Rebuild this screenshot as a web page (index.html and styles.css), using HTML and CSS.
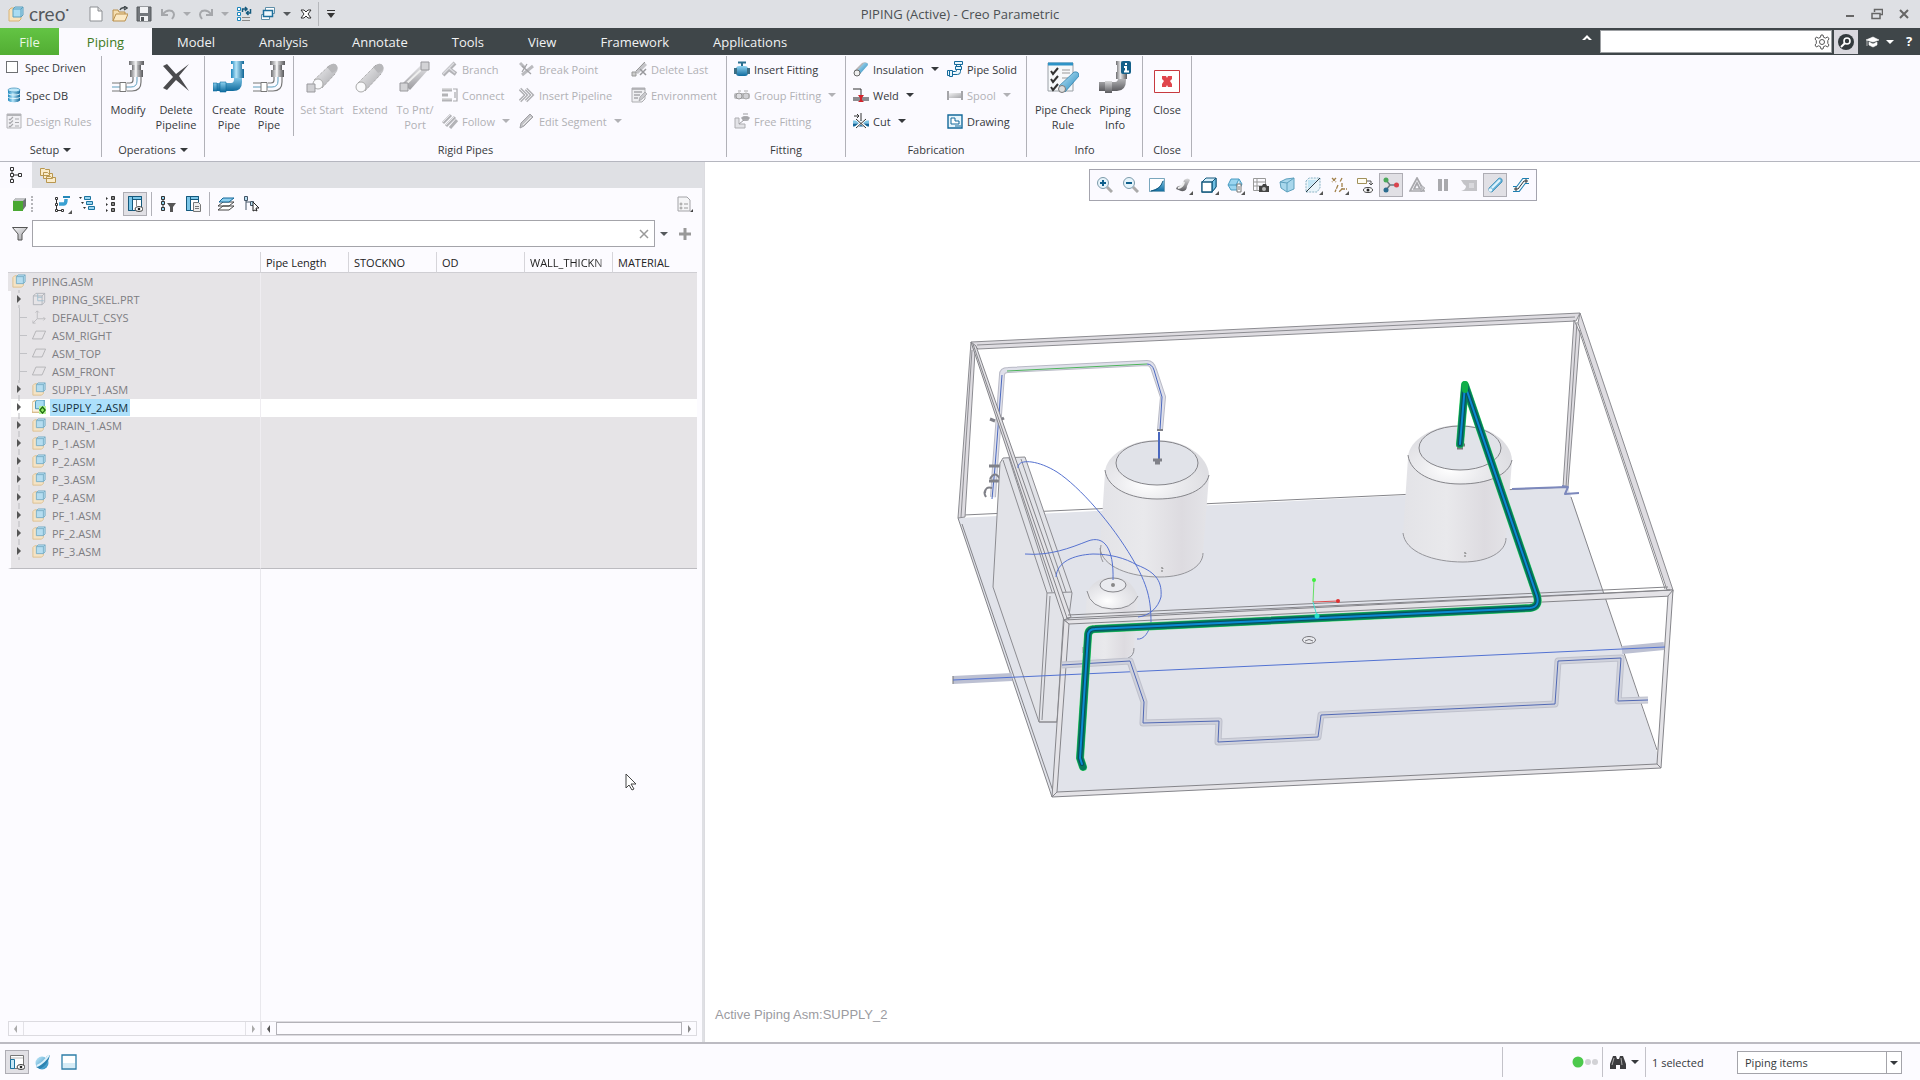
FILE: index.html
```html
<!DOCTYPE html>
<html lang="en">
<head>
<meta charset="utf-8">
<title>PIPING (Active) - Creo Parametric</title>
<link rel="stylesheet" href="styles.css">
</head>
<body>
<svg class="sprite" aria-hidden="true">
  <defs>
    <linearGradient id="steel" x1="0" y1="0" x2="1" y2="1"><stop offset="0" stop-color="#f4f4f6"/><stop offset="1" stop-color="#a3a3a7"/></linearGradient>
    <linearGradient id="water" x1="0" y1="0" x2="1" y2="1"><stop offset="0" stop-color="#c9ebfa"/><stop offset="1" stop-color="#1c86bd"/></linearGradient>
    <linearGradient id="waterV" x1="0" y1="0" x2="0" y2="1"><stop offset="0" stop-color="#8fd2f0"/><stop offset="1" stop-color="#0f6b9e"/></linearGradient>
    <linearGradient id="waterH" x1="0" y1="0" x2="1" y2="0"><stop offset="0" stop-color="#1b86be"/><stop offset=".4" stop-color="#b5e4f8"/><stop offset="1" stop-color="#0f6596"/></linearGradient>
    <linearGradient id="metalH" x1="0" y1="0" x2="1" y2="0"><stop offset="0" stop-color="#6d6d70"/><stop offset=".4" stop-color="#e6e6e8"/><stop offset="1" stop-color="#59595c"/></linearGradient>
    <linearGradient id="metalV" x1="0" y1="0" x2="0" y2="1"><stop offset="0" stop-color="#d8d8da"/><stop offset="1" stop-color="#5c5c60"/></linearGradient>
    <linearGradient id="tank" x1="0" y1="0" x2="1" y2="0"><stop offset="0" stop-color="#e3e3e7"/><stop offset=".4" stop-color="#e9e9ec"/><stop offset=".75" stop-color="#dddbe0"/><stop offset="1" stop-color="#e4e4e8"/></linearGradient>
    <radialGradient id="dome" cx=".4" cy=".75" r=".6"><stop offset="0" stop-color="#fff"/><stop offset=".5" stop-color="#ebebee"/><stop offset="1" stop-color="#dedee2"/></radialGradient>
  </defs>
  <symbol id="asm" viewBox="0 0 16 16"><path d="M1 4l2-2h4v8h6v3l-2 2H1z" fill="#f8e3bd" stroke="#d9b577"/><path d="M5 3l2-2h8v8l-2 2H5z" fill="#a9dcf3" stroke="#5c9fbd"/><path d="M5 3h8v8M13 3l2-2" fill="none" stroke="#5c9fbd"/></symbol>
  <symbol id="tri" viewBox="0 0 8 8"><path d="M0 2h8L4 6z" fill="currentColor"/></symbol>
  <symbol id="new" viewBox="0 0 16 16"><path d="M2 1h8l4 4v10H2z" fill="#fff" stroke="#8c8f93"/><path d="M10 1v4h4" fill="#ddd" stroke="#8c8f93"/></symbol>
  <symbol id="open" viewBox="0 0 16 16"><path d="M1 15V4h5l1 2h6v3" fill="#f5deb0" stroke="#b98f4c"/><path d="M1 15l3-7h12l-3 7z" fill="#fbe9c5" stroke="#b98f4c"/><path d="M8 4q1-3 5-2M12 0l3 2-3 2" fill="none" stroke="#3f474a" stroke-width="1.4"/></symbol>
  <symbol id="save" viewBox="0 0 16 16"><path d="M1 1h14v14H1z" fill="#74787d" stroke="#54585c"/><path d="M4 1h8v6H4zM4 10h8v5H4z" fill="#f2f3f5"/><path d="M5 11h3v4H5z" fill="#54585c"/></symbol>
  <symbol id="undo" viewBox="0 0 16 16"><path d="M2 3v6h6" fill="none" stroke="#a5a7ab" stroke-width="2"/><path d="M3 8q4-5 9-3q4 3 0 8" fill="none" stroke="#a5a7ab" stroke-width="2"/></symbol>
  <symbol id="redo" viewBox="0 0 16 16"><path d="M14 3v6H8" fill="none" stroke="#a5a7ab" stroke-width="2"/><path d="M13 8Q9 3 4 5q-4 3 0 8" fill="none" stroke="#a5a7ab" stroke-width="2"/></symbol>
  <symbol id="regen" viewBox="0 0 16 16"><path d="M1.500 1.500h3v3h-3zM1.500 6.500h3v3h-3zM1.500 11.500h3v3h-3z" fill="#fff" stroke="#1d87bd"/><path d="M6 11.500h8M6 14.500h8" stroke="#888"/><path d="M6.500 6V3h4M9 1l2 2-2 2M14.500 3v4h-4M12.500 5l-2 2 2 2" fill="none" stroke="#14597d" stroke-width="1.500"/></symbol>
  <symbol id="windows" viewBox="0 0 16 16"><path d="M5.500 1.500h9v6h-9zM1.500 8.500h8v5h-8z" fill="#fff" stroke="#5f8fa8"/><path d="M3.500 4.500h9v6h-9z" fill="#eef8fd" stroke="#1d6f9c" stroke-width="1.500"/></symbol>
  <symbol id="closewin" viewBox="0 0 16 16"><path d="M3 4h3l2 2 2-2h3l-3 4 3 4h-3l-2-2-2 2H3l3-4z" fill="#fff" stroke="#333"/></symbol>
  <symbol id="db" viewBox="0 0 16 16"><path d="M2 3v10c0 3 12 3 12 0V3z" fill="url(#waterH)"/><ellipse cx="8" cy="3" rx="6" ry="2" fill="#bfe7f8" stroke="#1b7aa9" stroke-width=".6"/><path d="M2 6.500c0 2 12 2 12 0M2 10c0 2 12 2 12 0" fill="none" stroke="#e2f5fc"/></symbol>
  <symbol id="rules" viewBox="0 0 16 16"><path d="M1 1h14v14H1z" fill="#f1f0f4" stroke="#b4b4b8"/><path d="M1 2h14" stroke="#b4b4b8" stroke-width="2"/><path d="M3 6l1 1 3-3M3 9.500l1 1 3-3M3 13l1 1 3-3M9 6h4M9 9.500h4M9 13h4" fill="none" stroke="#a9a9ad" stroke-width="1.200"/></symbol>
  <symbol id="routepipe" viewBox="0 0 32 32"><path d="M17 0h15v4H17z" fill="url(#metalH)"/><path d="M20 4h9v5h-9z" fill="url(#metalH)"/><path d="M18 9h13v7H18z" fill="url(#metalH)"/><path d="M24 0v16" stroke="#fff"/><path d="M21 16v3q0 3-3 3h-3M29 16v5q0 9-9 9h-5M0 22h8M0 30h8" fill="none" stroke="#777" stroke-width="1.200"/><path d="M25 16v4q0 6-6 6H0" fill="none" stroke="#5d9dbc"/><path d="M8 21.500h6v9H8z" fill="#fff" stroke="#777"/></symbol>
  <symbol id="createpipe" viewBox="0 0 32 32"><path d="M0 22h18q3 0 3-4v-3h8v6q0 9-9 9H0z" fill="url(#waterV)"/><path d="M18 0h13v3H18zM20 3h9v6h-9zM18 8h13v9H18z" fill="url(#waterH)"/><path d="M0 22h4v8H0zM7 21h6v10H7z" fill="url(#waterV)" stroke="#0f6b9e" stroke-width=".6"/></symbol>
  <symbol id="delpipe" viewBox="0 0 32 32"><path d="M3 5l4-2 9 10L29 3 19 15l10 15L16 19 7 29l-4-2 10-11z" fill="#4b4b4e"/></symbol>
  <symbol id="setstart" viewBox="0 0 32 32"><path d="M8 19L24 4q5-3 7 1t-2 8L16 27z" fill="url(#steel)"/><path d="M24 4q5-3 7 1t-5 7l-5-6z" fill="#b7b7ba"/><circle cx="12" cy="23" r="5" fill="#fafafc" stroke="#aaa"/><path d="M8 19L24 4M16 27l13-14" stroke="#999" stroke-dasharray="1 1"/><path d="M1 23h8v8H1z" fill="#d0d0d3" stroke="#99999d"/></symbol>
  <symbol id="extend" viewBox="0 0 32 32"><path d="M4 22L22 4q5-3 7 1t-2 8L11 30z" fill="url(#steel)"/><path d="M22 4q5-3 7 1t-5 7l-5-6z" fill="#b7b7ba"/><circle cx="7" cy="26" r="5" fill="#fafafc" stroke="#aaa"/><path d="M4 22L22 4M11 30l16-17" stroke="#999" stroke-dasharray="1 1"/></symbol>
  <symbol id="topnt" viewBox="0 0 32 32"><path d="M4 22L23 3l6 6-18 20z" fill="url(#metalV)" opacity=".6"/><path d="M8 22L26 5" stroke="#eee" stroke-width="2"/><path d="M1 22h8v8H1zM22 1h8v8h-8z" fill="#d3d3d6" stroke="#98989c"/></symbol>
  <symbol id="branch" viewBox="0 0 16 16"><path d="M1 14L13 2M7 8l7 5" stroke="#b3b3b7" stroke-width="4"/><path d="M1 13L12 2M7 7l6 5" stroke="#dcdce0" stroke-width="1.500"/></symbol>
  <symbol id="connect" viewBox="0 0 16 16"><path d="M0 3h10M0 8h6M0 13h10" stroke="#b3b3b7" stroke-width="3"/><path d="M0 2h10M0 12h10" stroke="#ddd"/><path d="M11 2h4v12h-4M13 5v6" fill="none" stroke="#a9a9ad" stroke-width="1.200"/></symbol>
  <symbol id="follow" viewBox="0 0 16 16"><path d="M1 10L9 2M4 13l9-9M8 15l7-8" stroke="#b3b3b7" stroke-width="3"/><path d="M1 9l8-8M4 12l9-9" stroke="#e4e4e8"/></symbol>
  <symbol id="breakpt" viewBox="0 0 16 16"><path d="M3 14l11-9M1 2l5 5" stroke="#bbbbbf" stroke-width="3"/><path d="M3 5l9 8M8 3l-5 8" stroke="#a2a2a6" stroke-width="1.300"/></symbol>
  <symbol id="inspipe" viewBox="0 0 16 16"><path d="M1 2l6 6-6 6M7 2l6 6-6 6" fill="none" stroke="#b3b3b7" stroke-width="3.500"/><path d="M1 2l6 6-6 6M7 2l6 6-6 6" fill="none" stroke="#e9e9ed"/></symbol>
  <symbol id="editseg" viewBox="0 0 16 16"><path d="M1 15l1-5 9-9 3 3-9 9z" fill="#c4c4c8" stroke="#a0a0a4"/><path d="M4 12l8-8" stroke="#eee"/></symbol>
  <symbol id="dellast" viewBox="0 0 16 16"><path d="M4 11l9-10 3 3-9 9z" fill="#c4c4c8"/><path d="M1 11h4v4H1z" fill="#ccc" stroke="#999"/><path d="M5 10l9-9" stroke="#999"/><path d="M9 8l6 6M15 8l-6 6" stroke="#98989c" stroke-width="1.500"/></symbol>
  <symbol id="env" viewBox="0 0 16 16"><path d="M1 1h13v11l-3 3H1z" fill="#efeff2" stroke="#adadb1"/><path d="M1 2h13M3 5h8M3 8h6M3 11h4" stroke="#a8a8ac" stroke-width="1.500"/><path d="M8 14l1-4 5-5 2 2-5 5z" fill="#c9c9cd" stroke="#9f9fa3" stroke-width=".7"/></symbol>
  <symbol id="insfit" viewBox="0 0 16 16"><path d="M4 1.500h8M8 1v4" stroke="#2a6f8f" stroke-width="2"/><rect x="2" y="5" width="12" height="10" rx="3" fill="url(#waterV)"/><path d="M0 7h3v6H0zM13 7h3v6h-3z" fill="#3c6f86"/></symbol>
  <symbol id="groupfit" viewBox="0 0 16 16"><rect x="0" y="6" width="16" height="6" rx="2" fill="#b9b9bd"/><circle cx="5" cy="9" r="3" fill="#dcdce0" stroke="#999"/><circle cx="12" cy="9" r="3" fill="#cfcfd3" stroke="#aaa"/><path d="M4 4h3M10 4h4" stroke="#aaa"/></symbol>
  <symbol id="freefit" viewBox="0 0 16 16"><path d="M1 5v10h10v-4H5V5z" fill="#e3e3e7" stroke="#adadb1"/><rect x="8" y="3" width="7" height="5" rx="2" fill="#aeaeb2"/><path d="M9 1h5M7 5h9M5 11l5-4" stroke="#9d9da1"/></symbol>
  <symbol id="insul" viewBox="0 0 16 16"><path d="M1 10L9 2q4-2 6 1L6 14q-5 0-5-4z" fill="#b5b5b8"/><path d="M3 11l8-9q4-1 4 2l-8 9z" fill="url(#water)"/><circle cx="4" cy="12" r="3" fill="#eee" stroke="#666"/></symbol>
  <symbol id="weld" viewBox="0 0 16 16"><path d="M0 12h16" stroke="#8c8c90" stroke-width="4"/><path d="M0 2h8v6" fill="none" stroke="#333"/><path d="M5 8h6l-2 3v2l2 2H5l2-2v-2z" fill="#d2232b"/></symbol>
  <symbol id="cut" viewBox="0 0 16 16"><path d="M0 9h16" stroke="#7cc5e6" stroke-width="3"/><path d="M0 12h16" stroke="#15679a" stroke-width="3"/><path d="M2 15l11-9M3 6l11 9" stroke="#fff" stroke-width="2.500"/><path d="M3 15l10-9M3 6l10 9M8 0v8M1 3h5M4 1l2 2-2 2" fill="none" stroke="#333"/></symbol>
  <symbol id="solid" viewBox="0 0 16 16"><path d="M7.500.5h8v3h-8zM9.500 3.500h4v2h-4zM8.500 5.500h6v3h-6zM9.500 8.500v1q0 1-1 1h-3M13.500 8.500v2q0 3-3 3h-5M.5 9.500h2v5h-2zM2.500 9.500h3v6h-3z" fill="#e8f6fc" stroke="#14699a"/></symbol>
  <symbol id="spool" viewBox="0 0 16 16"><path d="M1 6h14v5H1z" fill="url(#steel)"/><path d="M1 4v9M15 4v9" stroke="#a5a5a9" stroke-width="2"/></symbol>
  <symbol id="drawing" viewBox="0 0 16 16"><path d="M1 2h14v13H1z" fill="#e6f5fc" stroke="#14699a" stroke-width="1.400"/><path d="M4 5h4v3h4v3H4z" fill="#fff" stroke="#14699a"/><path d="M8 13h6" stroke="#14699a"/></symbol>
  <symbol id="check" viewBox="0 0 32 32"><path d="M1 2h25v28H1z" fill="#f6f8fa" stroke="#9aa0a6"/><path d="M1 3h25" stroke="#2d93c7" stroke-width="3"/><path d="M4 10l2 3 5-6M4 18l2 3 5-6M4 26l2 3 5-6" fill="none" stroke="#333" stroke-width="2"/><path d="M15 9h8M15 12h8M15 17h6" stroke="#999"/><path d="M12 25L27 11q5-1 5 4L18 31z" fill="url(#water)" stroke="#0f6b9e" stroke-width=".6"/><circle cx="15" cy="28" r="3.500" fill="#ddd" stroke="#777"/></symbol>
  <symbol id="info" viewBox="0 0 32 32"><path d="M0 21h16q3 0 3-4v-4h8v6q0 11-9 11H0z" fill="url(#metalV)"/><path d="M17 0h6v4h-6zM18 4h8v7h-8zM17 11h11v7H17z" fill="url(#metalH)"/><path d="M6 20h7v12H6z" fill="url(#metalV)"/><rect x="22" y="0" width="10" height="13" rx="2" fill="#14608a"/><path d="M27 2v2M25 6h2v4M25 10.500h5" stroke="#fff" stroke-width="2" fill="none"/></symbol>
  <symbol id="closebig" viewBox="0 0 32 32"><path d="M3.500 9.500h25v22h-25z" fill="#fff" stroke="#c73a40"/><path d="M11 15h4l1 2 1-2h4v3l-2 2 2 3v3h-4l-1-2-1 2h-4v-3l2-3-2-2z" fill="#e0464c"/></symbol>
  <symbol id="gear" viewBox="0 0 16 16"><path d="M7 1h2l.6 2.300 2 .8 2-1.200 1.400 2-1.200 1.700v2.800L15 11l-1.400 2-2-1.200-2 .8L9 15H7l-.6-2.400-2-.8-2 1.200L1 11l1.300-1.600V6.600L1 5l1.400-2 2 1.200 2-.8z" fill="#fff" stroke="#555"/><circle cx="8" cy="8" r="2.500" fill="#fff" stroke="#555"/></symbol>
  <symbol id="find" viewBox="0 0 16 16"><circle cx="8" cy="8" r="8" fill="#333a3d"/><circle cx="9" cy="7" r="3" fill="none" stroke="#fff" stroke-width="1.600"/><path d="M7 9l-4 4" stroke="#fff" stroke-width="2"/></symbol>
  <symbol id="cap" viewBox="0 0 16 16"><path d="M2 6l7-3 6 3-6 2zM5 8l4 2 4-2v3l-4 2-4-2zM3 7v5" fill="#fff" stroke="#fff" stroke-width=".6"/></symbol>
  <symbol id="treetab" viewBox="0 0 16 16"><path d="M2.500.5h3v3h-3zM2.500 6.500h3v3h-3zM2.500 12.500h3v3h-3zM10.500 6.500h3v3h-3zM4 4v2M4 10v2M6 8h4" fill="none" stroke="#333"/></symbol>
  <symbol id="folders" viewBox="0 0 16 16"><path d="M.5 1.500h4l1 1h4v6h-9zM3.500 5.500h4l1 1h4v5h-9zM6.500 9.500h4l1 1h4v5h-9z" fill="#fbecca" stroke="#b9974f"/></symbol>
  <symbol id="cube" viewBox="0 0 16 16"><path d="M2 5l3-3h10v8l-3 4z" fill="#6f7275"/><path d="M2 5l3-3h10l-3 3z" fill="#c2c4c6"/><path d="M2 5h10v10H2z" fill="#4aa832"/></symbol>
  <symbol id="tpipes" viewBox="0 0 16 16"><path d="M1.500 1.500h2v2h-2zM1.500 7.500h2v2h-2zM1.500 13.500h2v2h-2zM7.500 13.500h2v2h-2zM2.500 4v3M2.500 10v3M4 14.500h3" fill="none" stroke="#333"/><path d="M5 8h5q2 0 2-5" fill="none" stroke="#3aa0d2" stroke-width="3.500"/><path d="M9 1h7" stroke="#2487b8" stroke-width="2" fill="none"/></symbol>
  <symbol id="texpand" viewBox="0 0 16 16"><path d="M0 1h3L1.500 3zM2 6h3L3.500 8zM4 11h3L5.500 13z" fill="#333"/><path d="M5.500.5h6v3h-6zM7.500 5.500h6v3h-6zM9.500 10.500h6v3h-6z" fill="#9bd5f0" stroke="#1c739f"/></symbol>
  <symbol id="tlist" viewBox="0 0 16 16"><path d="M3 1l2 1.500L3 4zM3 7l2 1.500L3 10zM3 13l2 1.500L3 16z" fill="#333"/><path d="M8.500.5h3v3h-3zM8.500 6.500h3v3h-3zM8.500 12.500h3v3h-3z" fill="#888" stroke="#333"/></symbol>
  <symbol id="tcols" viewBox="0 0 16 16"><path d="M1.500.5h13v14h-13z" fill="#fff" stroke="#14597d"/><path d="M1.500.5h4v14h-4zM5.500.5h9v3h-9z" fill="#7cc6e8" stroke="#14597d"/><path d="M9.500 4v6" stroke="#888"/><ellipse cx="12" cy="13" rx="4" ry="2.500" fill="#fff" stroke="#444"/><circle cx="12" cy="13" r="1.300" fill="#222"/></symbol>
  <symbol id="tfilter" viewBox="0 0 16 16"><path d="M1.500.5h3v3h-3zM1.500 5.500h3v3h-3zM1.500 11.500h3v3h-3zM3 4v1M3 9v2" fill="#8fcfee" stroke="#333"/><path d="M7 7h9l-3 4v5h-3v-5z" fill="#555"/></symbol>
  <symbol id="tcolset" viewBox="0 0 16 16"><path d="M1.500.5h12v14h-12z" fill="#fff" stroke="#14597d"/><path d="M1.500.5h4v14h-4zM5.500.5h8v3h-8z" fill="#7cc6e8" stroke="#14597d"/><path d="M8.500 6.500h5l2 2v7h-7z" fill="#eee" stroke="#777"/><path d="M10 10.500h4M10 12.500h4" stroke="#777"/></symbol>
  <symbol id="layers" viewBox="0 0 16 16"><path d="M0 14l5-4h11l-5 4zM0 10l5-4h11l-5 4z" fill="#fff" stroke="#444"/><path d="M1 6l4-4h11l-5 4z" fill="#8fcfee" stroke="#14699a"/></symbol>
  <symbol id="tsel" viewBox="0 0 16 16"><path d="M1.500.5h3v4h-3zM3 5v9M3 6h4M7.500 5.500h3v4h-3z" fill="#b9e0f3" stroke="#456"/><path d="M10 6l6 6h-3l1 3-2-1-2 1z" fill="#fff" stroke="#222"/></symbol>
  <symbol id="page" viewBox="0 0 16 16"><path d="M1 1h9l3 3v11H1z" fill="#f5f5f7" stroke="#a3a3a7"/><circle cx="4" cy="8" r="1" fill="none" stroke="#999"/><circle cx="4" cy="12" r="1" fill="none" stroke="#999"/><path d="M7 8h4M7 12h4" stroke="#999"/><path d="M16 13v3h-3z" fill="#444"/></symbol>
  <symbol id="funnel" viewBox="0 0 16 16"><path d="M.5 1.500h15L10 8v6H6V8z" fill="url(#steel)" stroke="#555"/></symbol>
  <symbol id="skel" viewBox="0 0 16 16"><path d="M1.500 4.500l3-3h10v10l-3 3h-10zM1.500 4.500h10v10M11.500 4.500l3-3" fill="none" stroke="#9fa4aa"/><path d="M6.500 2v8h7M6.500 6h5" fill="none" stroke="#8fb6c9"/></symbol>
  <symbol id="csys" viewBox="0 0 16 16"><path d="M6 1v9l-5 5M6 10h9M4 3l2-2 2 2M13 8l2 2-2 2M1 12v3h3" fill="none" stroke="#b0b0b4"/></symbol>
  <symbol id="plane" viewBox="0 0 16 16"><path d="M.5 12.500l4-9h11l-4 9z" fill="none" stroke="#a2a2a6"/></symbol>
  <symbol id="active" viewBox="0 0 16 16"><path d="M0 3l2-2h3v8h6v3l-2 2H0z" fill="#fbf3e1" stroke="#c79f5b"/><path d="M4 2l2-2h8v8l-2 2H4z" fill="#a9dcf3" stroke="#3f8fb4"/><path d="M8 7h8v9H8z" fill="#b9f59a"/><path d="M12 8l3 3.500-3 3.500-3-3.500z" fill="#8fe861" stroke="#1d6a10" stroke-width="1.500"/></symbol>
  <symbol id="node" viewBox="0 0 16 18"><path d="M8 0v3M8 15v3" stroke="#b9b9bd"/><path d="M6 5l4 4-4 4z" fill="#555"/></symbol>
  <symbol id="tick" viewBox="0 0 16 18"><path d="M8.500 0v18M8.500 9.500H16" stroke="#c2c2c6"/></symbol>
  <symbol id="zoomin" viewBox="0 0 16 16"><path d="M10 10l5 5" stroke="#aaa" stroke-width="3"/><circle cx="6" cy="6" r="5.500" fill="#e6f4fb" stroke="#7d9aaa"/><path d="M6 3v6M3 6h6" stroke="#0f5f8c" stroke-width="2"/></symbol>
  <symbol id="zoomout" viewBox="0 0 16 16"><path d="M10 10l5 5" stroke="#aaa" stroke-width="3"/><circle cx="6" cy="6" r="5.500" fill="#e6f4fb" stroke="#7d9aaa"/><path d="M3 6h6" stroke="#0f5f8c" stroke-width="2"/></symbol>
  <symbol id="refit" viewBox="0 0 16 16"><path d="M.5 1.500h15v13H.5z" fill="url(#waterV)"/><path d="M1 2h14Q13 11 1 14z" fill="#fff"/><path d="M.5 1.500h15v13H.5z" fill="none" stroke="#7aa6bd"/><path d="M2 14q9-1 12-10" fill="none" stroke="#14597d"/></symbol>
  <symbol id="render" viewBox="0 0 16 16"><path d="M1 12q1-4 6-3l2-6q4-3 6 0l-3 6q0 6-6 5z" fill="url(#metalV)"/><path d="M3 11q5-1 6-6" stroke="#eee" stroke-width="2" fill="none"/></symbol>
  <symbol id="views" viewBox="0 0 16 16"><path d="M1 5l4-4h10v9l-4 5H1z" fill="#d4eefa" stroke="#14597d"/><path d="M11 5l4-4v9l-4 5z" fill="#6fbfe3" stroke="#14597d"/><path d="M1 5h10v10H1z" fill="#fff" stroke="#14597d" stroke-width="1.300"/></symbol>
  <symbol id="saved" viewBox="0 0 16 16"><path d="M4 2h8l3 5-3 6H4L1 8z" fill="#9bd5f0" stroke="#4b9cc2"/><path d="M1 8h14M12 2l-3 6 3 5" stroke="#4b9cc2" fill="#d9f0fa"/><path d="M10 7h4v8h-4z" fill="#fff" stroke="#777"/><path d="M11 10h2M11 12h2" stroke="#777"/></symbol>
  <symbol id="snap" viewBox="0 0 16 16"><path d="M.5 1.500h12v12H.5zM4 2v11M1 5h11M1 9h11" fill="none" stroke="#999"/><path d="M6 9h3l1-2h3l1 2h2v6H6z" fill="#444"/><circle cx="11" cy="12" r="2" fill="#bbb"/></symbol>
  <symbol id="persp" viewBox="0 0 16 16"><path d="M1 5l6-3 8-1v11l-7 3-6-4z" fill="#a8d7ec" stroke="#5c9fbd"/><path d="M1 5l7 1 7-5M8 6v9" stroke="#5c9fbd" fill="none"/></symbol>
  <symbol id="section" viewBox="0 0 16 16"><path d="M1 4l3-3h11v10l-3 4H1z" fill="#eaf5fa" stroke="#8bb3c6" stroke-dasharray="2 1"/><path d="M3 12L12 3H3z" fill="#c3e6f5"/><path d="M1 15L15 1" stroke="#2a3b44"/></symbol>
  <symbol id="datum" viewBox="0 0 16 16"><path d="M1 1l4 4M5 1L1 5M11 1L9 5M7 8l-3 7M11 6v6h5M11 12l-3 3" stroke="#a1804a" stroke-width="1.300" fill="none" stroke-dasharray="4 1"/></symbol>
  <symbol id="annot" viewBox="0 0 16 16"><path d="M.5 1.500h9v5h-9z" fill="#fffdf2" stroke="#a1905a"/><path d="M10 4h4v4M12 6l2 2 2-2" fill="none" stroke="#555"/><ellipse cx="11" cy="13" rx="4.500" ry="2.500" fill="#fff" stroke="#444"/><circle cx="11" cy="13" r="1.500" fill="#222"/></symbol>
  <symbol id="spin" viewBox="0 0 16 16"><path d="M3 3l4 5-4 5M7 8h6" stroke="#6d7a80" stroke-width="1.500" fill="none"/><circle cx="3" cy="3" r="2.500" fill="#4aa85a"/><circle cx="13.500" cy="8" r="2.500" fill="#d9444d"/><circle cx="3" cy="13" r="2.500" fill="#2b6c8f"/></symbol>
  <symbol id="simtri" viewBox="0 0 16 16"><path d="M8 1l7 13H1zM8 6l3 6H5z" fill="none" stroke="#a8a8ac" stroke-width="1.700"/><path d="M12 8l4 3-4 4z" fill="#c5c5c9" stroke="#a0a0a4" stroke-width=".6"/></symbol>
  <symbol id="pause" viewBox="0 0 16 16"><path d="M3 2h4v12H3zM9 2h4v12H9z" fill="#a9a9ad"/></symbol>
  <symbol id="stopsim" viewBox="0 0 16 16"><path d="M0 3h16v11H0q5-1 5-5-3-2-5-6z" fill="#c4c4c8"/><path d="M8 6h5v5H8z" fill="#d9d9dd"/></symbol>
  <symbol id="pipedisp" viewBox="0 0 16 16"><path d="M2 11L12 1q4 0 3 4L5 15q-4 0-3-4z" fill="url(#water)" stroke="#2b84b0" stroke-width=".7"/><path d="M5 11l8-8" stroke="#e2f5fd" stroke-width="2"/><circle cx="3.500" cy="13" r="1.800" fill="#e8f7fd"/></symbol>
  <symbol id="pipedim" viewBox="0 0 16 16"><path d="M0 12h5l6-8h5" fill="none" stroke="#1c7fb2" stroke-width="6"/><path d="M0 12h5l6-8h5" fill="none" stroke="#f2f9fc" stroke-width="4"/><path d="M1 12h4l6-8h4M3 10v4M13 2v4" stroke="#333" fill="none"/></symbol>
  <symbol id="corner" viewBox="0 0 4 4"><path d="M4 0v4H0z" fill="#555"/></symbol>
  <symbol id="globe" viewBox="0 0 16 16"><circle cx="7" cy="9" r="6.500" fill="url(#water)"/><path d="M1 13q7-2 11-11l3-1q-2 10-10 14z" fill="#2c83b2"/><path d="M2 12Q9 9 14 1" stroke="#dff3fc" stroke-width="2" fill="none"/></symbol>
  <symbol id="blank" viewBox="0 0 16 16"><path d="M1 1h14v14H1z" fill="#fff" stroke="#2c7ea8" stroke-width="1.300"/><path d="M2 9h12v5H2z" fill="#d6ecf6"/></symbol>
  <symbol id="showtree" viewBox="0 0 16 16"><path d="M1.500 1.500h13v13h-13z" fill="#fff" stroke="#777"/><path d="M1.500 5.500h4v9h-4z" fill="#c9e8f6" stroke="#1c739f"/><path d="M2 4h12" stroke="#bbb"/><ellipse cx="12" cy="13" rx="4" ry="2.500" fill="#fff" stroke="#444"/><circle cx="12" cy="13" r="1.300" fill="#222"/></symbol>
  <symbol id="binoc" viewBox="0 0 16 16"><path d="M3 2h3l1 3h2l1-3h3l3 8v5h-6v-4H6v4H0v-5z" fill="#3c3c3f"/><path d="M4 4l-2 7M11 4l1 7" stroke="#aaa"/></symbol>
</svg>

<div class="app">
  <header class="titlebar">
    <div class="quick">
      <svg class="i16"><use href="#asm"/></svg><span class="brand">creo<sup>•</sup></span>
      <button class="tb" aria-label="New"><svg class="i16"><use href="#new"/></svg></button>
      <button class="tb" aria-label="Open"><svg class="i16"><use href="#open"/></svg></button>
      <button class="tb" aria-label="Save"><svg class="i16"><use href="#save"/></svg></button>
      <button class="tb" aria-label="Undo"><svg class="i16"><use href="#undo"/></svg></button>
      <button class="tb drop dim" aria-label="Undo list"><svg class="i8"><use href="#tri"/></svg></button>
      <button class="tb" aria-label="Redo"><svg class="i16"><use href="#redo"/></svg></button>
      <button class="tb drop dim" aria-label="Redo list"><svg class="i8"><use href="#tri"/></svg></button>
      <button class="tb" aria-label="Regenerate"><svg class="i16"><use href="#regen"/></svg></button>
      <button class="tb" aria-label="Windows"><svg class="i16"><use href="#windows"/></svg></button>
      <button class="tb drop" aria-label="Window list"><svg class="i8"><use href="#tri"/></svg></button>
      <button class="tb" aria-label="Close window"><svg class="i16"><use href="#closewin"/></svg></button>
      <button class="tb custom" aria-label="Customize"><svg class="i12" viewBox="0 0 12 12"><path d="M2 2.500h8" stroke="#333"/><path d="M2 5h8L6 10z" fill="#333"/></svg></button>
    </div>
    <h1>PIPING (Active) - Creo Parametric</h1>
    <div class="winbtns">
      <button aria-label="Minimize"><svg class="i12" viewBox="0 0 12 12"><path d="M2 8h8" stroke="#666" stroke-width="2"/></svg></button>
      <button aria-label="Restore"><svg class="i12" viewBox="0 0 12 12"><path d="M3.500 4V1.500h8v5H9M1 5.500h8v5H1z" fill="none" stroke="#666" stroke-width="1.500"/></svg></button>
      <button aria-label="Close"><svg class="i12" viewBox="0 0 12 12"><path d="M2 2l8 8M10 2l-8 8" stroke="#666" stroke-width="2"/></svg></button>
    </div>
  </header>

  <nav class="tabs">
    <button class="tab file">File</button>
    <button class="tab current">Piping</button>
    <button class="tab">Model</button>
    <button class="tab">Analysis</button>
    <button class="tab">Annotate</button>
    <button class="tab">Tools</button>
    <button class="tab">View</button>
    <button class="tab">Framework</button>
    <button class="tab">Applications</button>
    <div class="search">
      <button class="collapse" aria-label="Minimize ribbon"><svg class="i12" viewBox="0 0 12 12"><path d="M1 8l5-5 5 5H8L6 6 4 8z" fill="#fff"/></svg></button>
      <div class="searchbox"><input type="text" aria-label="Search"><svg class="i16"><use href="#gear"/></svg></div>
      <button class="find" aria-label="Find"><svg class="i16"><use href="#find"/></svg></button>
      <button class="learn" aria-label="Learning"><svg class="i16"><use href="#cap"/></svg><svg class="i8"><use href="#tri"/></svg></button>
      <button class="help" aria-label="Help">?</button>
    </div>
  </nav>

  <div class="ribbon">
    <section class="group setup">
      <div class="body"><div class="col">
        <label class="spec"><input type="checkbox">Spec Driven</label>
        <button class="small"><svg class="i16"><use href="#db"/></svg>Spec DB</button>
        <button class="small" disabled><svg class="i16"><use href="#rules"/></svg>Design Rules</button>
      </div></div>
      <h2>Setup<svg class="i8"><use href="#tri"/></svg></h2>
    </section>
    <section class="group operations">
      <div class="body">
        <button class="big w42"><svg class="i32"><use href="#routepipe"/></svg>Modify</button>
        <button class="big w54"><svg class="i32"><use href="#delpipe"/></svg>Delete<br>Pipeline</button>
      </div>
      <h2>Operations<svg class="i8"><use href="#tri"/></svg></h2>
    </section>
    <section class="group rigid">
      <div class="body">
        <div class="pair">
          <button class="big w42"><svg class="i32"><use href="#createpipe"/></svg>Create<br>Pipe</button>
          <button class="big w38"><svg class="i32"><use href="#routepipe"/></svg>Route<br>Pipe</button>
        </div>
        <button class="big w48" disabled><svg class="i32"><use href="#setstart"/></svg>Set Start</button>
        <button class="big w48" disabled><svg class="i32"><use href="#extend"/></svg>Extend</button>
        <button class="big w42" disabled><svg class="i32"><use href="#topnt"/></svg>To Pnt/<br>Port</button>
        <div class="col c1">
          <button class="small" disabled><svg class="i16"><use href="#branch"/></svg>Branch</button>
          <button class="small" disabled><svg class="i16"><use href="#connect"/></svg>Connect</button>
          <button class="small" disabled><svg class="i16"><use href="#follow"/></svg>Follow<svg class="i8"><use href="#tri"/></svg></button>
        </div>
        <div class="col c2">
          <button class="small" disabled><svg class="i16"><use href="#breakpt"/></svg>Break Point</button>
          <button class="small" disabled><svg class="i16"><use href="#inspipe"/></svg>Insert Pipeline</button>
          <button class="small" disabled><svg class="i16"><use href="#editseg"/></svg>Edit Segment<svg class="i8"><use href="#tri"/></svg></button>
        </div>
        <div class="col">
          <button class="small" disabled><svg class="i16"><use href="#dellast"/></svg>Delete Last</button>
          <button class="small" disabled><svg class="i16"><use href="#env"/></svg>Environment</button>
        </div>
      </div>
      <h2>Rigid Pipes</h2>
    </section>
    <section class="group fitting">
      <div class="body"><div class="col">
        <button class="small"><svg class="i16"><use href="#insfit"/></svg>Insert Fitting</button>
        <button class="small" disabled><svg class="i16"><use href="#groupfit"/></svg>Group Fitting<svg class="i8"><use href="#tri"/></svg></button>
        <button class="small" disabled><svg class="i16"><use href="#freefit"/></svg>Free Fitting</button>
      </div></div>
      <h2>Fitting</h2>
    </section>
    <section class="group fabrication">
      <div class="body">
        <div class="col c3">
          <button class="small"><svg class="i16"><use href="#insul"/></svg>Insulation<svg class="i8"><use href="#tri"/></svg></button>
          <button class="small"><svg class="i16"><use href="#weld"/></svg>Weld<svg class="i8"><use href="#tri"/></svg></button>
          <button class="small"><svg class="i16"><use href="#cut"/></svg>Cut<svg class="i8"><use href="#tri"/></svg></button>
        </div>
        <div class="col">
          <button class="small"><svg class="i16"><use href="#solid"/></svg>Pipe Solid</button>
          <button class="small" disabled><svg class="i16"><use href="#spool"/></svg>Spool<svg class="i8"><use href="#tri"/></svg></button>
          <button class="small"><svg class="i16"><use href="#drawing"/></svg>Drawing</button>
        </div>
      </div>
      <h2>Fabrication</h2>
    </section>
    <section class="group infog">
      <div class="body">
        <button class="big w62"><svg class="i32"><use href="#check"/></svg>Pipe Check<br>Rule</button>
        <button class="big w42"><svg class="i32"><use href="#info"/></svg>Piping<br>Info</button>
      </div>
      <h2>Info</h2>
    </section>
    <section class="group closeg">
      <div class="body"><button class="big w42"><svg class="i32"><use href="#closebig"/></svg>Close</button></div>
      <h2>Close</h2>
    </section>
  </div>

  <main class="work">
    <aside class="side">
      <div class="sidetabs">
        <button class="current" aria-label="Model Tree"><svg class="i16"><use href="#treetab"/></svg></button>
        <button aria-label="Folder Browser"><svg class="i16"><use href="#folders"/></svg></button>
      </div>
      <div class="sidebody">
        <div class="treetools">
          <button class="first" aria-label="Model"><svg class="i16"><use href="#cube"/></svg></button>
          <span class="grip"></span>
          <button aria-label="Piping view"><svg class="i16"><use href="#tpipes"/></svg><svg class="more"><use href="#corner"/></svg></button>
          <button aria-label="Expand"><svg class="i16"><use href="#texpand"/></svg></button>
          <button class="narrow" aria-label="Collapse"><svg class="i16"><use href="#tlist"/></svg></button>
          <button class="on" aria-label="Columns"><svg class="i16"><use href="#tcols"/></svg></button>
          <span class="rule"></span>
          <button aria-label="Tree filters"><svg class="i16"><use href="#tfilter"/></svg></button>
          <button aria-label="Tree columns"><svg class="i16"><use href="#tcolset"/></svg></button>
          <span class="rule"></span>
          <button aria-label="Layers"><svg class="i16"><use href="#layers"/></svg></button>
          <button aria-label="Select in tree"><svg class="i16"><use href="#tsel"/></svg></button>
          <button class="end" aria-label="Settings"><svg class="i16"><use href="#page"/></svg></button>
        </div>
        <div class="filterrow">
          <svg class="i16"><use href="#funnel"/></svg>
          <div class="filterbox"><input type="text" aria-label="Filter"><svg class="i12" viewBox="0 0 12 12"><path d="M2 2l8 8M10 2l-8 8" stroke="#999" stroke-width="1.500"/></svg></div>
          <button aria-label="Filter list"><svg class="i8"><use href="#tri"/></svg></button>
          <button aria-label="Add"><svg class="i12" viewBox="0 0 12 12"><path d="M6 0v12M0 6h12" stroke="#999" stroke-width="3"/></svg></button>
        </div>
        <table class="tree">
          <colgroup><col class="name"><col class="val"><col class="val"><col class="val"><col class="val"><col></colgroup>
          <thead><tr><th></th><th>Pipe Length</th><th>STOCKNO</th><th>OD</th><th><span class="fade">WALL_THICKN</span></th><th>MATERIAL</th></tr></thead>
          <tbody>
            <tr class="root"><td><div><svg class="i14"><use href="#asm"/></svg><span>PIPING.ASM</span></div></td><td></td><td></td><td></td><td></td><td></td></tr>
            <tr><td><div><svg class="branch"><use href="#node"/></svg><svg class="i14"><use href="#skel"/></svg><span>PIPING_SKEL.PRT</span></div></td><td></td><td></td><td></td><td></td><td></td></tr>
            <tr><td><div><svg class="branch"><use href="#tick"/></svg><svg class="i14"><use href="#csys"/></svg><span>DEFAULT_CSYS</span></div></td><td></td><td></td><td></td><td></td><td></td></tr>
            <tr><td><div><svg class="branch"><use href="#tick"/></svg><svg class="i14"><use href="#plane"/></svg><span>ASM_RIGHT</span></div></td><td></td><td></td><td></td><td></td><td></td></tr>
            <tr><td><div><svg class="branch"><use href="#tick"/></svg><svg class="i14"><use href="#plane"/></svg><span>ASM_TOP</span></div></td><td></td><td></td><td></td><td></td><td></td></tr>
            <tr><td><div><svg class="branch"><use href="#tick"/></svg><svg class="i14"><use href="#plane"/></svg><span>ASM_FRONT</span></div></td><td></td><td></td><td></td><td></td><td></td></tr>
            <tr><td><div><svg class="branch"><use href="#node"/></svg><svg class="i14"><use href="#asm"/></svg><span>SUPPLY_1.ASM</span></div></td><td></td><td></td><td></td><td></td><td></td></tr>
            <tr class="active"><td><div><svg class="branch"><use href="#node"/></svg><svg class="i14"><use href="#active"/></svg><span>SUPPLY_2.ASM</span></div></td><td></td><td></td><td></td><td></td><td></td></tr>
            <tr><td><div><svg class="branch"><use href="#node"/></svg><svg class="i14"><use href="#asm"/></svg><span>DRAIN_1.ASM</span></div></td><td></td><td></td><td></td><td></td><td></td></tr>
            <tr><td><div><svg class="branch"><use href="#node"/></svg><svg class="i14"><use href="#asm"/></svg><span>P_1.ASM</span></div></td><td></td><td></td><td></td><td></td><td></td></tr>
            <tr><td><div><svg class="branch"><use href="#node"/></svg><svg class="i14"><use href="#asm"/></svg><span>P_2.ASM</span></div></td><td></td><td></td><td></td><td></td><td></td></tr>
            <tr><td><div><svg class="branch"><use href="#node"/></svg><svg class="i14"><use href="#asm"/></svg><span>P_3.ASM</span></div></td><td></td><td></td><td></td><td></td><td></td></tr>
            <tr><td><div><svg class="branch"><use href="#node"/></svg><svg class="i14"><use href="#asm"/></svg><span>P_4.ASM</span></div></td><td></td><td></td><td></td><td></td><td></td></tr>
            <tr><td><div><svg class="branch"><use href="#node"/></svg><svg class="i14"><use href="#asm"/></svg><span>PF_1.ASM</span></div></td><td></td><td></td><td></td><td></td><td></td></tr>
            <tr><td><div><svg class="branch"><use href="#node"/></svg><svg class="i14"><use href="#asm"/></svg><span>PF_2.ASM</span></div></td><td></td><td></td><td></td><td></td><td></td></tr>
            <tr class="last"><td><div><svg class="branch"><use href="#node"/></svg><svg class="i14"><use href="#asm"/></svg><span>PF_3.ASM</span></div></td><td></td><td></td><td></td><td></td><td></td></tr>
          </tbody>
        </table>
        <div class="filler"></div>
        <div class="scrolls">
          <div class="hscroll names"><svg class="i8" viewBox="0 0 8 8"><path d="M5 0v8L2 4z" fill="#aaa"/></svg><i></i><svg class="i8" viewBox="0 0 8 8"><path d="M3 0v8l3-4z" fill="#aaa"/></svg></div>
          <div class="hscroll values"><svg class="i8" viewBox="0 0 8 8"><path d="M5 0v8L2 4z" fill="#555"/></svg><i></i><svg class="i8" viewBox="0 0 8 8"><path d="M3 0v8l3-4z" fill="#888"/></svg></div>
        </div>
      </div>
    </aside>

    <section class="view">
      <svg class="model" viewBox="705 162 1215 880" preserveAspectRatio="xMidYMid meet" role="img" aria-label="Piping assembly">
        <defs>
          <g id="vessel">
            <path d="M1105 473L1100 548C1102 567 1130 577 1160 577C1185 577 1203 567 1203 553L1209 476z" fill="url(#tank)"/>
            <path d="M1100 548C1102 567 1130 577 1160 577C1185 577 1203 567 1203 553" fill="none" stroke="#95959a"/>
            <path d="M1105 472C1106 455 1130 440 1157 440C1185 440 1208 456 1209 475C1206 490 1185 499 1157 499C1130 499 1107 488 1105 472z" fill="url(#dome)"/>
            <path d="M1105 470C1107 488 1130 499 1157 499C1185 499 1206 490 1209 475" fill="none" stroke="#85858a"/>
            <ellipse cx="1157" cy="463" rx="41" ry="22" fill="#e1e3e9" stroke="#85858a"/>
            <path d="M1161 568q2-1 2 1M1161 571h2" stroke="#777" fill="none"/>
          </g>
        </defs>
        <!-- floor -->
        <path d="M958 518L1568 487L1657 752L1661 768L1052 797z" fill="#e1e3ea"/>
        <path d="M964 515L1566 487M1571 497L1657 750" fill="none" stroke="#85858a"/>
        <!-- back frame -->
        <g fill="#dedce1" stroke="#8c8c91">
          <path d="M971 342L1580 313L1576 321L978 349z"/><path d="M977 345L1575 317"/>
          <path d="M971 342L958 518L965 517L975 352z"/><path d="M972 350L961 517"/>
          <path d="M1574 320L1563 487H1568L1580 333z"/><path d="M1577 322L1566 487"/>
          <path d="M1580 313L1673 590L1667 590L1578 323z"/><path d="M1579 330L1665 589"/>
        </g>
        <!-- supply 1 -->
        <g fill="none" stroke-linejoin="round">
          <path d="M993 497L995 467L1002 375Q1002 370 1008 370L1147 363Q1152 363 1154 370L1163 397L1160 430" stroke="#b9bac6" stroke-width="6"/>
          <path d="M993 497L995 467L1002 375Q1002 370 1008 370L1147 363Q1152 363 1154 370L1163 397L1160 430" stroke="#dfe0ea" stroke-width="4"/>
          <path d="M992 499L995 467L1002 375" stroke="#4a68bf"/>
          <path d="M1007 371L1147 364" stroke="#4cb35a"/>
          <path d="M1147 364Q1152 364 1154 370L1162 397L1160 430" stroke="#4a68bf"/>
          <path d="M990 419l5 2M1000 420l4-2M989 466h11M989 481h11" stroke="#808188" stroke-width="3"/>
          <path d="M990 479q5-9 10 0M985 493q0-7 7-5M986 497q-3-5 0-7M1157 430h6" stroke="#808188" stroke-width="2"/>
        </g>
        <!-- control cabinet -->
        <path d="M1003 458L1025 457L1072 593L1069 616L1057 722H1039L993 587L1000 463z" fill="#e2e3e8" stroke="#8c8c91"/>
        <path d="M1003 460L1047 593L1039 722L1057 722L1064 610M1047 593L1072 592M1009 458L1052 592M1021 459L1066 592M1050 596L1042 720" fill="none" stroke="#8c8c91"/>
        <path d="M958 518L1052 797M962 524L1055 797" stroke="#85858a" fill="none"/>
        <use href="#vessel"/><use href="#vessel" x="303" y="-15"/>
        <path d="M1159 432V460" stroke="#4a68bf" stroke-width="2"/><path d="M1153 460h9M1155 463h5" stroke="#808188" stroke-width="3"/>
        <!-- small vessel -->
        <path d="M1087 594L1083 646Q1085 657 1108 660Q1133 660 1134 648L1138 597z" fill="url(#tank)"/>
        <path d="M1087 594Q1092 578 1113 577Q1132 578 1138 597Q1132 609 1112 609Q1090 608 1087 594z" fill="url(#dome)"/>
        <path d="M1087 591Q1090 608 1112 609Q1132 609 1138 596M1083 647v6M1134 648q0 8-6 10" fill="none" stroke="#8c8c91"/>
        <ellipse cx="1113" cy="585" rx="13" ry="7" fill="#eaebef" stroke="#85858a"/><circle cx="1113" cy="585" r="2" fill="#888"/>
        <path d="M1101 545q-2 10 2 17" fill="none" stroke="#95959a"/>
        <!-- diagonal and front frame -->
        <g fill="#e4e3e7" stroke="#85858a">
          <path d="M971 342L1064 620L1071 617L976 346z"/><path d="M973 344L1067 618"/>
          <path d="M1064 620L1673 590L1672 596L1069 624z"/><path d="M1068 615L1668 587M1066 618L1670 590" fill="none"/>
          <path d="M1064 620L1052 797L1057 792L1069 624z"/>
          <path d="M1673 590L1661 768L1657 764L1668 596z"/>
          <path d="M1057 792L1657 764L1661 768L1052 797z"/>
        </g>
        <!-- drain runs -->
        <g fill="none" stroke-linejoin="round">
          <path d="M953 680L1012 677M1622 650L1664 646" stroke="#bcc0d2" stroke-width="8"/>
          <path d="M953 676v8" stroke="#777"/>
          <path d="M953 680L1665 647" stroke="#5272d2"/>
          <path d="M1062 665L1130 661L1144 702L1143 723L1219 721L1218 742L1318 737L1321 715L1555 704L1558 661L1621 658L1618 701L1648 700" stroke="#bfc1cc" stroke-width="7"/>
          <path d="M1062 665L1130 661L1144 702L1143 723L1219 721L1218 742L1318 737L1321 715L1555 704L1558 661L1621 658L1618 701L1648 700" stroke="#d0d2dc" stroke-width="5"/>
          <path d="M1062 665L1130 661L1144 702L1143 723L1219 721L1218 742L1318 737L1321 715L1555 704L1558 661L1621 658L1618 701L1648 700" stroke="#5068b4"/>
          <path d="M1512 489L1568 487L1565 494L1579 493M1568 487L1562 486" stroke="#7c88bc" stroke-width="2"/>
        </g>
        <!-- flexible lines -->
        <g fill="none" stroke="#5672d0">
          <path d="M1018 468C1017 459 1036 459 1057 472C1080 487 1112 524 1132 558C1148 585 1151 600 1151 623C1149 632 1144 640 1137 639"/>
          <path d="M1025 554C1050 556 1070 548 1088 541C1104 535 1114 548 1113 580"/>
          <path d="M1056 577C1057 562 1073 555 1093 554C1110 554 1125 558 1137 565C1158 573 1162 583 1161 597C1158 608 1149 616 1138 617"/>
        </g>
        <ellipse cx="1309" cy="640" rx="6.500" ry="3.500" fill="#e9eaee" stroke="#77777c"/><path d="M1305 641q4-3 8 0" fill="none" stroke="#77777c"/>
        <!-- supply 2, the active pipeline -->
        <path d="M1456 445h9M1457 448h6" stroke="#777" stroke-width="3"/>
        <g fill="none" stroke-linejoin="round" stroke-linecap="round">
          <path d="M1460 444L1465 385L1537 596Q1540 607 1530 608L1095 629Q1088 629 1088 636L1080 758L1083 767" stroke="#2bd65c" stroke-width="8"/>
          <path d="M1460 444L1465 385L1537 596Q1540 607 1530 608L1095 629Q1088 629 1088 636L1080 758L1083 767" stroke="#067a5c" stroke-width="7"/>
          <path d="M1460 444L1465 385L1537 596Q1540 607 1530 608L1095 629Q1088 629 1088 636L1080 758L1082 764" stroke="#06505f" stroke-width="4"/>
          <path d="M1460 444L1465 385L1537 596Q1540 607 1530 608L1095 629Q1088 629 1088 636L1080 758L1082 764" stroke="#0b8ad4" stroke-width="2"/>
          <path d="M1465 384v6" stroke="#0fb048" stroke-width="6"/>
        </g>
        <!-- coordinate system -->
        <path d="M1313 602L1314 580" stroke="#63e063"/><circle cx="1314" cy="580" r="2" fill="#3cf03c"/>
        <path d="M1313 602L1338 601" stroke="#e04c4c"/><circle cx="1338" cy="601" r="2" fill="#e03030"/>
        <path d="M1313 602L1317 616" stroke="#3fe3d0"/><circle cx="1317" cy="616" r="2.500" fill="#29e0c8"/>
      </svg>
      <div class="graphics">
        <button aria-label="Zoom in"><svg class="i16"><use href="#zoomin"/></svg></button>
        <button aria-label="Zoom out"><svg class="i16"><use href="#zoomout"/></svg></button>
        <button aria-label="Repaint"><svg class="i16"><use href="#refit"/></svg></button>
        <button aria-label="Rendering"><svg class="i16"><use href="#render"/></svg><svg class="more"><use href="#corner"/></svg></button>
        <button aria-label="Display style"><svg class="i16"><use href="#views"/></svg><svg class="more"><use href="#corner"/></svg></button>
        <button aria-label="Saved views"><svg class="i16"><use href="#saved"/></svg><svg class="more"><use href="#corner"/></svg></button>
        <button aria-label="View manager"><svg class="i16"><use href="#snap"/></svg></button>
        <button aria-label="Perspective"><svg class="i16"><use href="#persp"/></svg></button>
        <button aria-label="Section"><svg class="i16"><use href="#section"/></svg><svg class="more"><use href="#corner"/></svg></button>
        <button aria-label="Datum display"><svg class="i16"><use href="#datum"/></svg><svg class="more"><use href="#corner"/></svg></button>
        <button aria-label="Annotations"><svg class="i16"><use href="#annot"/></svg></button>
        <button class="on" aria-label="Spin center"><svg class="i16"><use href="#spin"/></svg></button>
        <button aria-label="Simulate" disabled><svg class="i16"><use href="#simtri"/></svg></button>
        <button aria-label="Pause" disabled><svg class="i16"><use href="#pause"/></svg></button>
        <button aria-label="Stop" disabled><svg class="i16"><use href="#stopsim"/></svg></button>
        <button class="on" aria-label="Thick pipes"><svg class="i16"><use href="#pipedisp"/></svg></button>
        <button aria-label="Pipe dimensions"><svg class="i16"><use href="#pipedim"/></svg></button>
      </div>
      <p class="note">Active Piping Asm:SUPPLY_2</p>
    </section>
  </main>

  <footer class="status">
    <button class="on" aria-label="Show tree"><svg class="i16"><use href="#showtree"/></svg></button>
    <button aria-label="Browser"><svg class="i16"><use href="#globe"/></svg></button>
    <button aria-label="Full screen"><svg class="i16"><use href="#blank"/></svg></button>
    <div class="state"><svg class="lamps" viewBox="0 0 28 12"><circle cx="6" cy="6" r="5.500" fill="#4cc94c"/><circle cx="16" cy="6" r="3" fill="#d2d2d6"/><circle cx="23" cy="6" r="3" fill="#d2d2d6"/></svg></div>
    <button class="search2" aria-label="Find items"><svg class="i16"><use href="#binoc"/></svg><svg class="i8"><use href="#tri"/></svg></button>
    <output>1 selected</output>
    <div class="pick"><select aria-label="Selection filter"><option>Piping items</option></select><svg class="i8"><use href="#tri"/></svg></div>
  </footer>
  <svg class="pointer" viewBox="0 0 12 18" aria-hidden="true"><path d="M1 1v14l3-3 3 5 2-1-3-5h5z" fill="#fff" stroke="#444"/></svg>
</div>
</body>
</html>
```
FILE: styles.css
```css
* { box-sizing: border-box; }
body {
  margin: 0;
  font: 11px/15px "Open Sans", "Noto Sans", sans-serif;
  color: #36393c;
  background: #fbfaff;
}
button, input, select { font: inherit; color: inherit; }
button {
  border: 0; padding: 0; background: none;
  display: flex; align-items: center; justify-content: center;
  white-space: nowrap;
}
svg { display: block; flex: none; }
h1, h2, p { margin: 0; font-weight: normal; }
.sprite { position: absolute; width: 0; height: 0; }
.i8 { width: 8px; height: 8px; }
.i12 { width: 12px; height: 12px; }
.i14 { width: 14px; height: 14px; }
.i16 { width: 16px; height: 16px; }
.i32 { width: 32px; height: 32px; }
.app { min-height: 100vh; display: flex; flex-direction: column; }

/* title bar */
.titlebar {
  height: 28px; background: #dee0e4;
  display: grid; grid-template-columns: 1fr auto 1fr; align-items: center;
}
.quick { display: flex; align-items: center; padding-left: 8px; }
.brand {
  width: 60px; padding-left: 5px;
  font: 19px/20px "Lato", sans-serif; color: #54585c;
}
.brand sup { font-size: 6px; vertical-align: 9px; line-height: 0; }
.tb { width: 24px; height: 24px; color: #55595c; }
.tb.drop { width: 14px; }
.tb.dim { color: #a9abaf; }
.tb.custom { border-left: 1px solid #b6b8bc; }
.titlebar h1 { font-size: 13px; line-height: 18px; color: #4c5053; }
.winbtns { display: flex; justify-content: flex-end; padding-right: 3px; }
.winbtns button { width: 27px; height: 24px; }

/* ribbon tabs */
.tabs { height: 27px; background: #3f4649; display: flex; }
.tab { padding: 0 22px; color: #f1f2f3; font-size: 13px; line-height: 18px; }
.tab.file { width: 59px; padding: 0; background: linear-gradient(#63c444, #52ad33); color: #eaf8e4; }
.tab.current { width: 93px; padding: 0; margin-right: 3px; background: #fbfaff; color: #3d7a22; }
.search { margin-left: auto; display: flex; align-items: center; color: #fff; }
.collapse { width: 26px; height: 20px; align-self: flex-start; }
.searchbox {
  width: 232px; height: 23px; display: flex; align-items: center;
  background: #fff; border: 1px solid #9da0a3; padding-right: 1px;
}
.searchbox input { flex: 1; min-width: 0; border: 0; background: none; outline: 0; color: #333; }
.find { width: 24px; height: 24px; margin-left: 2px; background: #d9d8de; }
.learn { width: 38px; gap: 6px; margin-left: 2px; }
.help { width: 22px; font-size: 13px; font-weight: bold; color: #fff; }

/* ribbon groups */
.ribbon { display: flex; height: 107px; padding-top: 1px; border-bottom: 1px solid #b5b6bf; }
.group {
  display: flex; flex-direction: column; height: 101px;
  border-right: 1px solid #b1b1b8;
}
.body { display: flex; flex: 1; }
.group h2 {
  display: flex; justify-content: center; align-items: center; gap: 4px;
  font-size: 11px; line-height: 15px;
}
.setup { width: 102px; } .operations { width: 103px; } .rigid { width: 522px; }
.fitting { width: 119px; } .fabrication { width: 181px; } .infog { width: 116px; } .closeg { width: 49px; }
.setup .body { padding-left: 6px; }
.operations .body { padding-left: 5px; }
.fitting .body, .fabrication .body { padding-left: 7px; }
.infog .body { padding-left: 5px; }
.closeg .body { padding-left: 3px; }
.col { display: flex; flex-direction: column; }
.small { height: 26px; justify-content: flex-start; gap: 4px; }
.small .i8 { margin-left: 3px; }
.spec { height: 22px; margin-bottom: 4px; display: flex; align-items: center; gap: 7px; white-space: nowrap; }
.spec input { appearance: none; width: 12px; height: 12px; margin: 0; border: 1px solid #6e7073; background: #fff; }
.c1 { width: 77px; margin-left: 6px; } .c2 { width: 112px; } .c3 { width: 94px; }
.big { flex-direction: column; justify-content: flex-start; padding-top: 5px; align-self: flex-start; }
.big .i32 { margin-bottom: 9px; }
.w38 { width: 38px; } .w42 { width: 42px; } .w48 { width: 48px; } .w54 { width: 54px; } .w62 { width: 62px; }
button:disabled { color: #b1b1b5; }
.pair { display: flex; height: 80px; padding: 0 5px 0 3px; margin-right: 4px; border-right: 1px solid #b1b1b8; }

/* model tree */
.work { flex: 1; display: flex; }
.side { width: 705px; display: flex; flex-direction: column; background: #dfe0e4; border-right: 1px solid #dcdce0; }
.sidetabs { height: 26px; display: flex; }
.sidetabs button { width: 32px; }
.sidetabs .current { background: #fbfaff; }
.sidebody {
  flex: 1; display: flex; flex-direction: column; padding: 4px 5px 6px 8px;
  margin-right: 2px; background: #fcfbff;
}
.treetools { display: flex; align-items: center; height: 24px; gap: 1px; }
.treetools button, .graphics button, .status > button { position: relative; width: 24px; height: 24px; }
.treetools .first, .treetools .narrow { width: 22px; }
.more { position: absolute; right: 2px; bottom: 2px; width: 4px; height: 4px; }
.on { background: #e1e0e5; border: 1px solid #aeadb4; }
.grip { height: 16px; border-left: 2px dotted #b5b5b9; margin: 0 16px 0 0; }
.rule { height: 24px; border-left: 1px solid #b1b1b8; margin: 0 3px; }
.treetools .end { margin-left: auto; }
.filterrow { display: flex; align-items: center; height: 27px; margin: 4px 0 5px; padding-left: 4px; }
.filterbox {
  flex: 1; height: 27px; margin-left: 4px; display: flex; align-items: center;
  border: 1px solid #a4a4aa; background: #fff; padding-right: 4px;
}
.filterbox input { flex: 1; min-width: 0; border: 0; outline: 0; background: none; }
.filterrow button { width: 18px; height: 24px; color: #55595c; }
.filterrow button + button { width: 24px; }
.tree { width: 100%; table-layout: fixed; border-collapse: separate; border-spacing: 0; }
.tree .name { width: 253px; }
.tree .val { width: 88px; }
.tree th {
  height: 21px; padding: 0 4px 0 5px; text-align: left; font-weight: normal;
  color: #222; border-right: 1px solid #d6d5da; border-bottom: 1px solid #cfced3;
  white-space: nowrap;
}
.tree th:last-child { border-right: 0; }
.fade { display: block; mask-image: linear-gradient(90deg, #000 80%, #0006); }
.tree td { height: 18px; padding: 0; background: #e6e4e7; color: #7d7d82; }
.tree td:first-child { border-left: 3px solid #fcfbff; border-right: 1px solid #efedf1; }
.tree .root td:first-child { border-left: 0; padding-left: 4px; }
.tree td div { display: flex; align-items: center; height: 18px; padding-bottom: 2px; }
.tree td span { padding: 0 2px; margin-left: 4px; line-height: 17px; }
.branch { width: 16px; height: 18px; margin-right: 5px; }
.tree td .i14 { opacity: .8; }
.tree .active td { background: #fff; }
.tree .active .i14 { opacity: 1; }
.tree .active span { background: #ade0fb; color: #143242; }
.tree .last td { height: 25px; padding-bottom: 7px; border-bottom: 1px solid #bcbbc0; }
.filler { flex: 1; width: 253px; border-right: 1px solid #e9e8ed; }
.scrolls { display: flex; }
.hscroll { height: 15px; display: flex; align-items: center; border: 1px solid #dcdbe0; padding: 0 3px; gap: 3px; }
.hscroll i { flex: 1; height: 13px; border: solid #e3e2e7; border-width: 0 1px; }
.names { width: 253px; }
.values { flex: 1; }
.values i { border: 1px solid #b3b2b8; }

/* graphics area */
.view {
  flex: 1; min-width: 0; position: relative; background: #fff;
  display: flex; flex-direction: column; align-items: center; padding: 7px 0 19px;
}
.model { position: absolute; inset: 0; width: 100%; height: 100%; }
.graphics {
  position: relative; display: flex; gap: 2px; height: 32px; padding: 3px;
  background: #fbfaff; border: 1px solid #a4a4ae;
}
.note {
  position: relative; margin: auto auto 0 10px;
  font: 13px/16px "Liberation Sans", sans-serif; color: #9b9b9f;
}

/* status bar */
.status {
  display: flex; align-items: center; height: 38px; padding: 0 18px 0 5px;
  border-top: 2px solid #bcbbc2; background: #fcfbff;
}
.status > button { margin-right: 2px; }
.status .state {
  width: 101px; height: 30px; margin-left: auto; display: flex; align-items: center; justify-content: flex-end;
  border: solid #c3c2c9; border-width: 0 1px; padding-right: 2px;
}
.lamps { width: 28px; height: 12px; }
.status .search2 { width: 43px; height: 30px; margin: 0; gap: 5px; border-right: 1px solid #c3c2c9; }
.status output { width: 91px; padding-left: 6px; }
.pick { position: relative; width: 165px; height: 23px; }
.pick select {
  appearance: none; width: 100%; height: 23px; padding: 0 7px;
  border: 1px solid #a4a4aa; border-radius: 0; background: #fff;
}
.pick svg { position: absolute; right: 4px; top: 8px; }
.pick::after { content: ""; position: absolute; right: 15px; top: 1px; height: 21px; border-left: 1px solid #a4a4aa; }

/* mouse pointer over the tree */
.pointer { position: absolute; left: 625px; top: 773px; width: 12px; height: 18px; }
```
